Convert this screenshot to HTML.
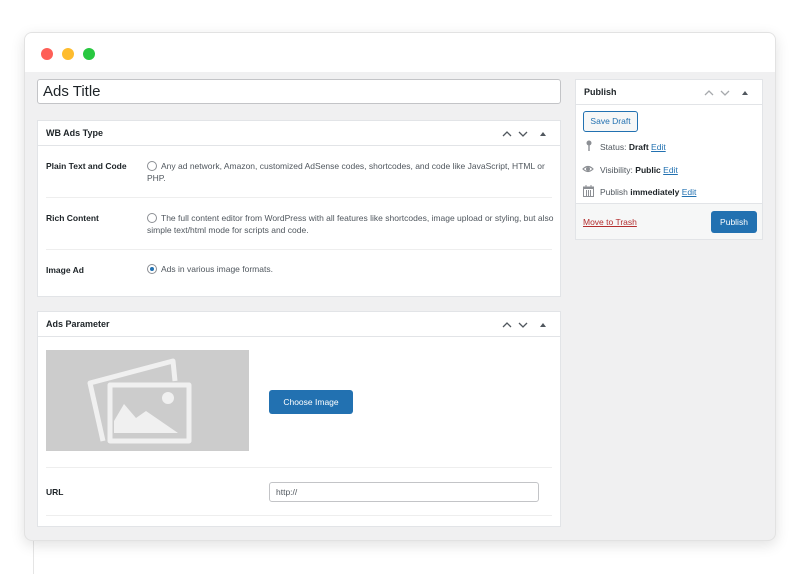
<!DOCTYPE html>
<html><head><style>
*{box-sizing:border-box;margin:0;padding:0}
body{width:800px;height:574px;background:#fff;font-family:"Liberation Sans",sans-serif;position:relative;overflow:hidden;font-size:8.5px;color:#50575e}
.win{position:absolute;left:24px;top:32px;width:752px;height:509px;border-radius:8px;background:#f0f0f1;box-shadow:0 4px 14px rgba(0,0,0,.12);overflow:hidden;border:1px solid #e2e2e2}
.bar{position:absolute;left:0;top:0;right:0;height:39px;background:#fff}
.dot{position:absolute;top:15px;width:12px;height:12px;border-radius:50%}
.box{position:absolute;background:#fff;border:1px solid #e2e4e7}
.hd{height:25px;border-bottom:1px solid #e2e4e7;font-weight:bold;font-size:9px;color:#1d2327;padding:7px 8px;position:relative}
.ctl{position:absolute;right:8px;top:8px}
.abs{position:absolute}
.lbl{font-weight:bold;color:#1d2327;font-size:8.5px}
.radio{display:inline-block;width:10px;height:10px;border:1px solid #8c8f94;border-radius:50%;vertical-align:-2px;margin-right:4px;position:relative}
.sep{position:absolute;left:8px;right:8px;height:1px;background:#eeeeee}
.btn{position:absolute;background:#2271b1;color:#fff;border-radius:3px;font-size:8.5px;text-align:center}
a{color:#2271b1;text-decoration:underline}
</style></head><body>
<div style="position:absolute;left:33px;top:541px;width:1px;height:33px;background:#e5e5e5"></div>
<div class="win">
 <div class="bar">
  <div class="dot" style="left:16px;background:#fe5f57"></div>
  <div class="dot" style="left:37px;background:#febc2e"></div>
  <div class="dot" style="left:58px;background:#28c840"></div>
 </div>
 <div class="abs" style="left:12px;top:46px;width:524px;height:25px;background:#fff;border:1px solid #c3c4c7;border-radius:3px;font-size:15px;color:#1d2327;padding:3px 5px">Ads Title</div>

 <div class="box" style="left:12px;top:87px;width:524px;height:177px">
  <div class="hd">WB Ads Type<svg class="ctl" width="50" height="10"><g fill="none" stroke="#50575e" stroke-width="1.3"><polyline points="1,7 5,3 9,7"/><polyline points="17,3 21,7 25,3"/></g><path d="M38 7 L41 3 L44 7Z" fill="#50575e"/></svg></div>
  <div class="abs lbl" style="left:8px;top:40px">Plain Text and Code</div>
  <div class="abs" style="left:109px;top:39px;width:410px;line-height:12px"><span class="radio"></span>Any ad network, Amazon, customized AdSense codes, shortcodes, and code like JavaScript, HTML or PHP.</div>
  <div class="sep" style="top:76px"></div>
  <div class="abs lbl" style="left:8px;top:92px">Rich Content</div>
  <div class="abs" style="left:109px;top:91px;width:410px;line-height:12px"><span class="radio"></span>The full content editor from WordPress with all features like shortcodes, image upload or styling, but also simple text/html mode for scripts and code.</div>
  <div class="sep" style="top:128px"></div>
  <div class="abs lbl" style="left:8px;top:144px">Image Ad</div>
  <div class="abs" style="left:109px;top:143px"><span class="radio"><span style="position:absolute;left:2px;top:2px;width:4px;height:4px;border-radius:50%;background:#2271b1"></span></span>Ads in various image formats.</div>
 </div>

 <div class="box" style="left:12px;top:278px;width:524px;height:216px">
  <div class="hd">Ads Parameter<svg class="ctl" width="50" height="10"><g fill="none" stroke="#50575e" stroke-width="1.3"><polyline points="1,7 5,3 9,7"/><polyline points="17,3 21,7 25,3"/></g><path d="M38 7 L41 3 L44 7Z" fill="#50575e"/></svg></div>
  <div class="abs" style="left:8px;top:38px;width:203px;height:101px;background:#cccccc">
   <svg width="203" height="101" viewBox="0 0 203 101">
    <g fill="none" stroke="#f0f0f0" stroke-width="5" stroke-linejoin="round">
     <path d="M57 91 L44 33 L127 11 L129 31"/>
     <rect x="64" y="35" width="79" height="56"/>
    </g>
    <circle cx="122" cy="48" r="6" fill="#f0f0f0"/>
    <path d="M68 83 L68 71 L78 54 L90 68 L100 61 L132 83 Z" fill="#f0f0f0"/>
   </svg>
  </div>
  <div class="btn" style="left:231px;top:78px;width:84px;height:24px;line-height:24px">Choose Image</div>
  <div class="sep" style="top:155px"></div>
  <div class="abs lbl" style="left:8px;top:175px">URL</div>
  <div class="abs" style="left:231px;top:170px;width:270px;height:20px;border:1px solid #c3c4c7;border-radius:3px;color:#50575e;padding:4px 6px">http://</div>
  <div class="sep" style="top:203px"></div>
 </div>

 <div class="box" style="left:550px;top:46px;width:188px;height:161px">
  <div class="hd">Publish<svg class="ctl" width="50" height="10"><g fill="none" stroke="#a7aaad" stroke-width="1.3"><polyline points="1,7 5,3 9,7"/><polyline points="17,3 21,7 25,3"/></g><path d="M38 7 L41 3 L44 7Z" fill="#50575e"/></svg></div>
  <div class="abs" style="left:7px;top:31px;width:55px;height:21px;border:1px solid #2271b1;border-radius:3px;color:#2271b1;text-align:center;line-height:19px;background:#f6f7f7">Save Draft</div>
  <svg class="abs" style="left:9px;top:60px" width="8" height="12"><circle cx="4" cy="3" r="2.5" fill="#8c8f94"/><rect x="3.3" y="4" width="1.4" height="7" fill="#8c8f94"/></svg>
  <div class="abs" style="left:24px;top:62px">Status: <b style="color:#1d2327">Draft</b> <a>Edit</a></div>
  <svg class="abs" style="left:6px;top:84px" width="12" height="10"><path d="M1 5 Q6 0 11 5 Q6 10 1 5Z" fill="none" stroke="#8c8f94" stroke-width="1.2"/><circle cx="6" cy="5" r="2" fill="#8c8f94"/></svg>
  <div class="abs" style="left:24px;top:85px">Visibility: <b style="color:#1d2327">Public</b> <a>Edit</a></div>
  <svg class="abs" style="left:7px;top:105px" width="11" height="12"><rect x="0.5" y="2" width="10" height="9.5" fill="none" stroke="#8c8f94"/><rect x="0.5" y="2" width="10" height="2" fill="#8c8f94"/><g stroke="#8c8f94"><line x1="3" y1="0" x2="3" y2="3"/><line x1="8" y1="0" x2="8" y2="3"/><line x1="3.5" y1="5" x2="3.5" y2="11"/><line x1="5.5" y1="5" x2="5.5" y2="11"/><line x1="7.5" y1="5" x2="7.5" y2="11"/></g></svg>
  <div class="abs" style="left:24px;top:107px">Publish <b style="color:#1d2327">immediately</b> <a>Edit</a></div>
  <div class="abs" style="left:0;right:0;bottom:0;height:36px;background:#f6f7f7;border-top:1px solid #e2e4e7">
   <a class="abs" style="left:7px;top:13px;color:#b32d2e">Move to Trash</a>
   <div class="btn" style="left:135px;top:7px;width:46px;height:22px;line-height:22px">Publish</div>
  </div>
 </div>
</div>
</body></html>
